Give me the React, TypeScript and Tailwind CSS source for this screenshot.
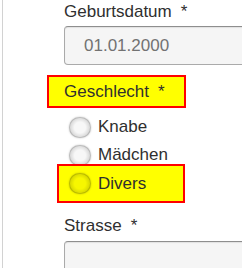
import React from "react";

function Radio({ label }: { label: string }) {
  return (
    <>
      <span className="w-[22px] h-[21px] shrink-0 rounded-full border border-[rgba(0,0,0,0.14)] bg-[radial-gradient(circle,rgba(0,0,0,0.03)_40%,rgba(0,0,0,0.26)_100%)] shadow-[0_0_2px_rgba(0,0,0,0.25)]" />
      <span className="leading-[20px]">{label}</span>
    </>
  );
}

export default function App() {
  return (
    <div className="w-[242px] h-[268px] overflow-hidden bg-white" style={{ fontFamily: '"Liberation Sans", Arial, sans-serif' }}>
      <div className="ml-[2px] h-full border-l border-[#d2d2d2] pl-[61px] text-[17px] text-[#2f2f2f]">
        <div className="pt-[2px] leading-[20px]">
          Geburtsdatum<span className="ml-[9px]">*</span>
        </div>
        <div className="mt-[4px] w-[300px] h-[39px] rounded-[4px] border border-[#aaaaaa] border-t-[#8e8e8e] bg-[#f5f5f5] shadow-[inset_0_1px_1px_rgba(0,0,0,0.08)] flex items-center pl-[19px] text-[#727272]">
          01.01.2000
        </div>

        <div className="mt-[10px] -ml-[17px] w-[139px] border-2 border-[#ff0000] bg-[#ffff00] pl-[15px] pt-[5px] pb-[4px] leading-[20px]">
          Geschlecht<span className="ml-[9px]">*</span>
        </div>

        <div className="mt-[5px]">
          <div className="h-[28px] flex items-center gap-[7px] pl-[5px]">
            <Radio label="Knabe" />
          </div>
          <div className="h-[28px] flex items-center gap-[7px] pl-[5px]">
            <Radio label="Mädchen" />
          </div>
          <div className="relative -mt-[5px] -ml-[7px] w-[128px] h-[39px] border-2 border-[#ff0000] bg-[#ffff00] flex items-center gap-[7px] pl-[10px]">
            <Radio label="Divers" />
          </div>
        </div>

        <div className="mt-[13px] leading-[20px]">
          Strasse<span className="ml-[9px]">*</span>
        </div>
        <div className="mt-[5px] w-[300px] h-[39px] rounded-[4px] border border-[#aaaaaa] border-t-[#8e8e8e] bg-[#f5f5f5] shadow-[inset_0_1px_1px_rgba(0,0,0,0.08)]" />
      </div>
    </div>
  );
}
